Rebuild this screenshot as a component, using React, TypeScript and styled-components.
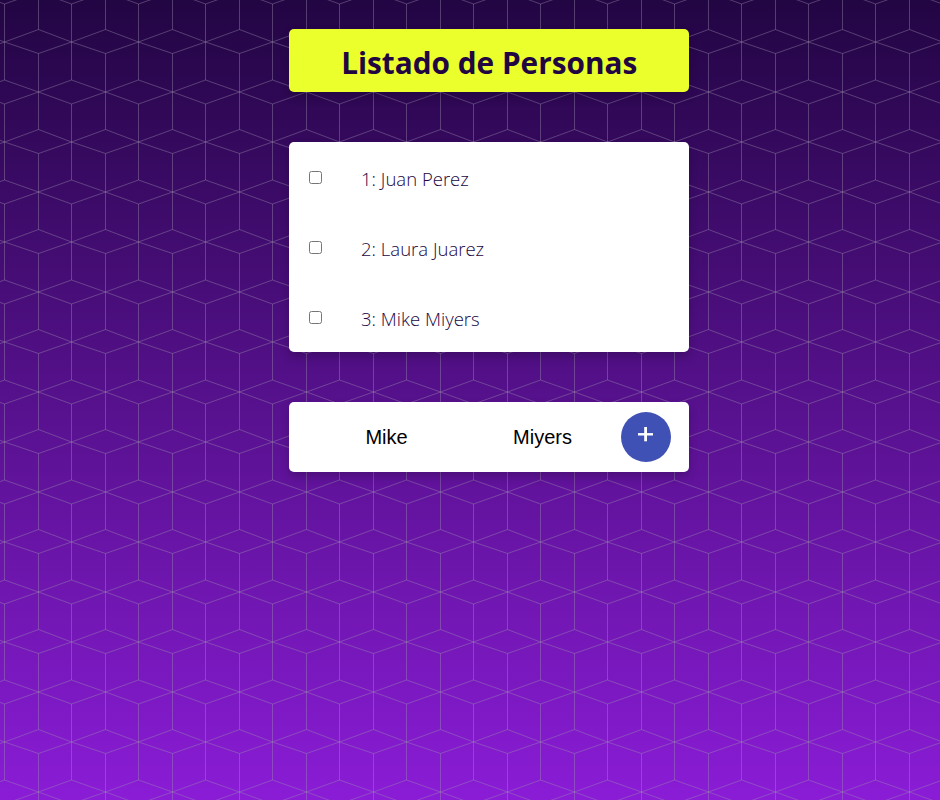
import React from "react";
import styled, { createGlobalStyle } from "styled-components";

const GlobalStyle = createGlobalStyle`
  * { box-sizing: border-box; }
  body { margin: 0; background: #210642; font-family: "Open Sans", "Noto Sans", sans-serif; }
`;

const Page = styled.main`
  position: relative;
  height: 800px;
  overflow: hidden;
  background: linear-gradient(#220543, #8a1cd6);
`;

const Backdrop = styled.svg`
  position: absolute;
  inset: 0;
  width: 100%;
  height: 100%;
`;

const Column = styled.div`
  position: relative;
  display: flex;
  flex-direction: column;
  gap: 50px;
  width: 400px;
  margin-left: 289px;
  padding-top: 29px;
`;

const Card = styled.section`
  background: #fff;
  border-radius: 5px;
  box-shadow: 0 5px 10px rgba(0, 0, 0, 0.2);
`;

const TitleCard = styled(Card)`
  height: 63px;
  background: #eaff2b;
  display: flex;
  align-items: center;
  justify-content: center;
`;

const Title = styled.h1`
  margin: 4px 0 0;
  font-size: 31px;
  line-height: 43px;
  font-weight: 700;
  color: #210642;
  white-space: nowrap;
  transform: scaleX(0.96);
`;

const Row = styled.label`
  display: flex;
  align-items: center;
  height: 70px;
  padding-left: 20px;
`;

const Check = styled.input`
  width: 13px;
  height: 13px;
  margin: 0 39px 0 0;
`;

const Name = styled.span`
  font-size: 19px;
  line-height: 27px;
  font-weight: 300;
  color: #210642;
  margin-top: 4px;
  transform: scaleX(0.975);
  transform-origin: left center;
`;

const Form = styled(Card)`
  display: flex;
  align-items: center;
  height: 70px;
  padding: 0 18px 0 19.5px;
`;

const Field = styled.input`
  width: 156px;
  height: 50px;
  padding: 0;
  border: 0;
  outline: 0;
  background: transparent;
  text-align: center;
  color: #000;
  font: 20px "Liberation Sans", sans-serif;
`;

const AddButton = styled.button`
  display: flex;
  justify-content: center;
  width: 50px;
  height: 50px;
  margin-left: auto;
  padding: 15px 0 0;
  border: 0;
  border-radius: 50%;
  background: #3f51b5;
`;

const people = ["Juan Perez", "Laura Juarez", "Mike Miyers"];

export default function App() {
  return (
    <Page>
      <GlobalStyle />
      <Backdrop aria-hidden="true">
        <defs>
          <pattern id="cubes" width="67" height="100" patternUnits="userSpaceOnUse">
            <g fill="none" stroke="#9c92ac" strokeOpacity="0.4">
              <path d="M4.5 4V80M38.5 0V29.5M38.5 53.5V100" />
              <path d="M-28.5 29.5L4.5 42L38.5 29.5L71.5 42M-28.5 53.5L4.5 42L38.5 53.5L71.5 42" />
              <path d="M-28.5 92L4.5 80L38.5 92L71.5 80M-28.5 92L4.5 104L38.5 92L71.5 104" />
              <path d="M-28.5 -8L4.5 4L38.5 -8L71.5 4" />
            </g>
          </pattern>
        </defs>
        <rect width="100%" height="100%" fill="url(#cubes)" />
      </Backdrop>
      <Column>
        <TitleCard><Title>Listado de Personas</Title></TitleCard>
        <Card>
          {people.map((name, i) => (
            <Row key={name}>
              <Check type="checkbox" />
              <Name>{i + 1}: {name}</Name>
            </Row>
          ))}
        </Card>
        <Form>
          <Field defaultValue="Mike" aria-label="Nombre" />
          <Field defaultValue="Miyers" aria-label="Apellido" />
          <AddButton aria-label="Agregar">
            <svg width="16" height="16" viewBox="0 0 16 16">
              <path d="M7.6 0V14.3" stroke="#fff" strokeWidth="2.8" />
              <path d="M0 7.3H15" stroke="#fff" strokeWidth="2.4" />
            </svg>
          </AddButton>
        </Form>
      </Column>
    </Page>
  );
}
